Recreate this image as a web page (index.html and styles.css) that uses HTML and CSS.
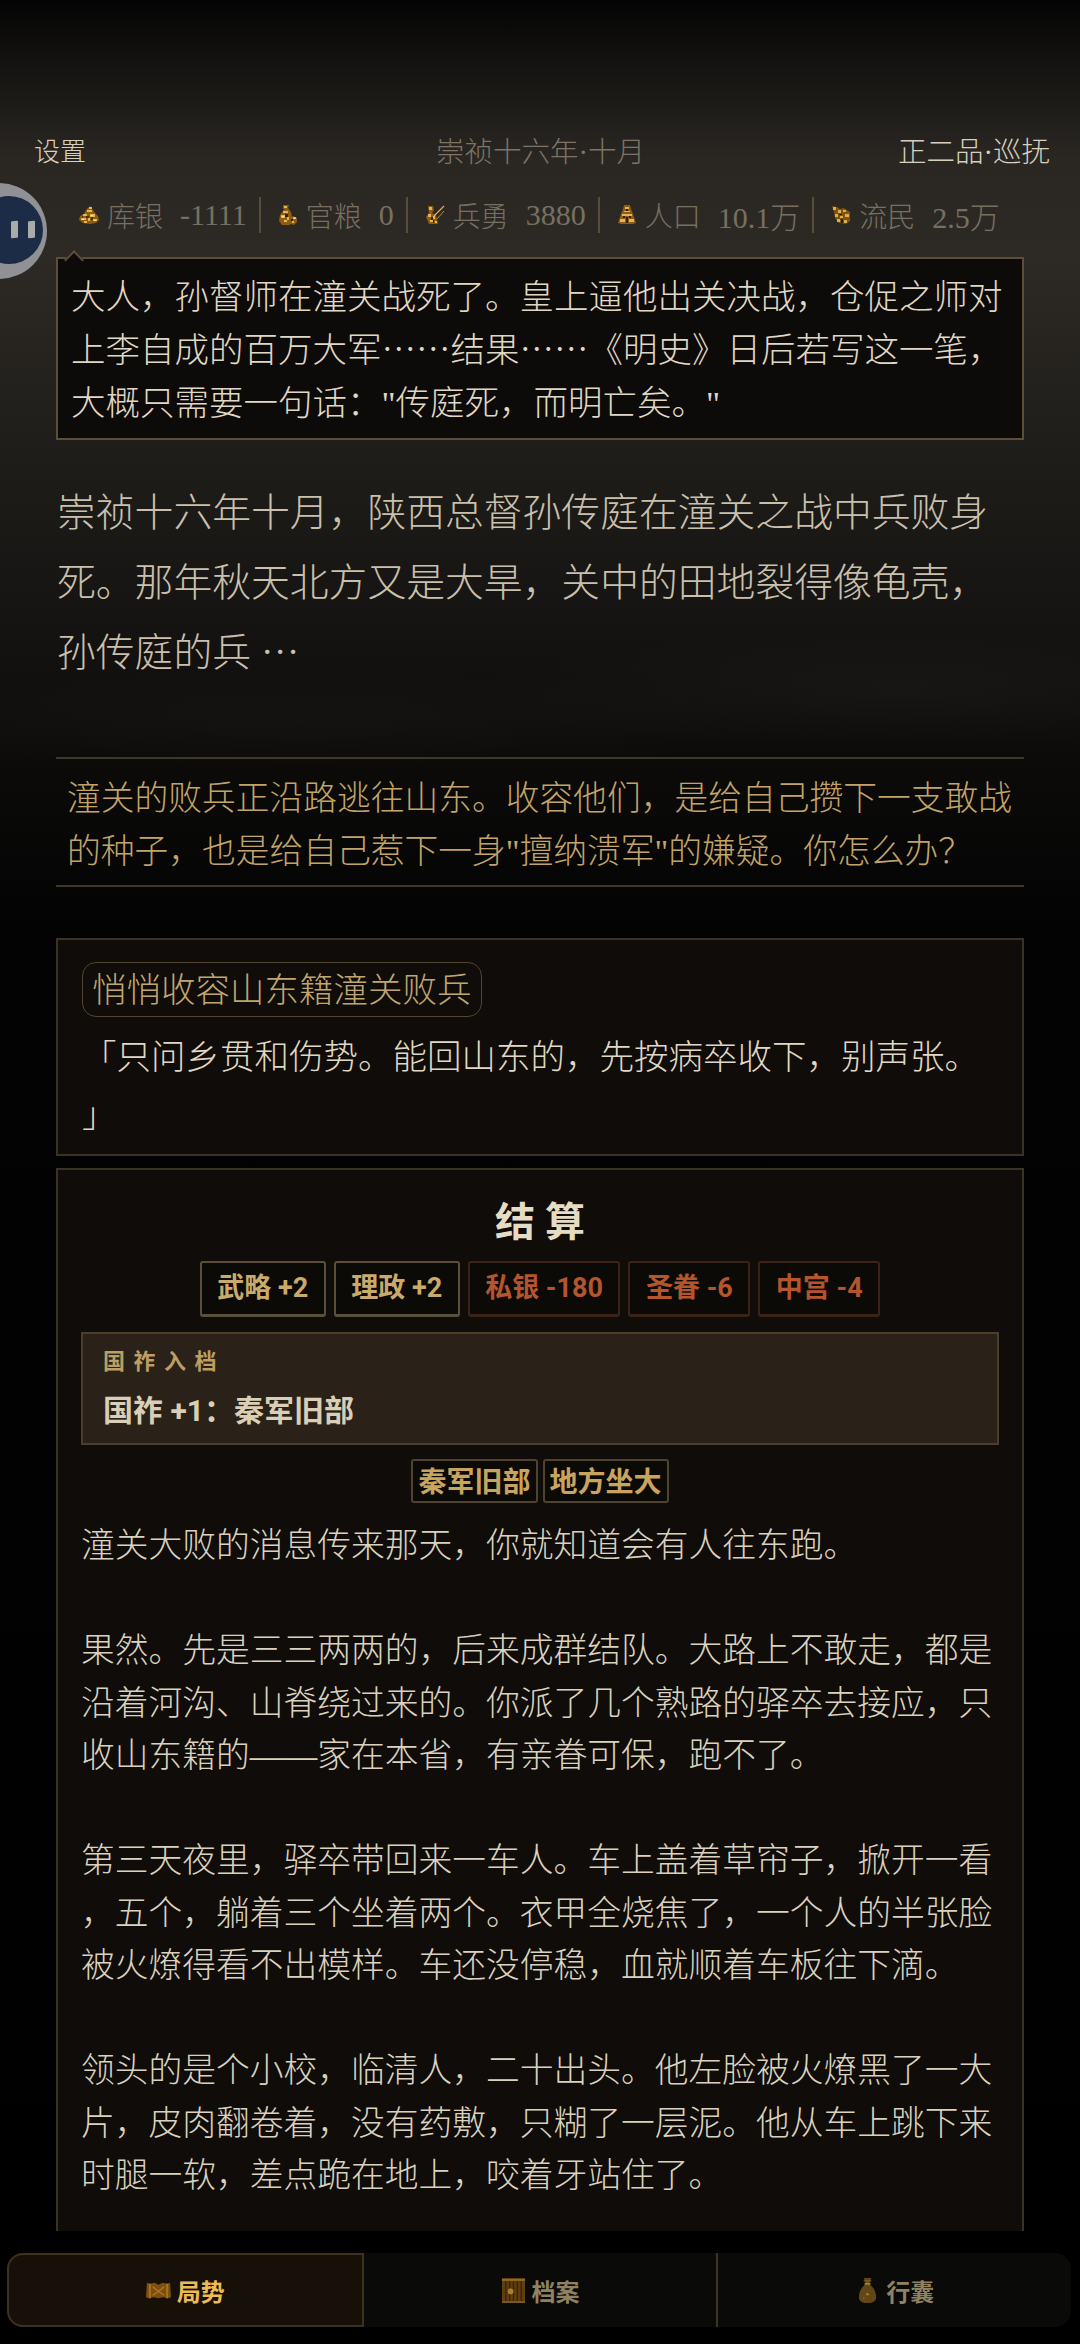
FILE: index.html
```html
<!DOCTYPE html>
<html lang="zh-CN">
<head>
    <meta charset="UTF-8">
    <title>崇祯十六年</title>
    <link rel="stylesheet" href="styles.css">
</head>

<body>
    <!-- 悬浮按钮 -->
    <div class="float-ball">
        <div class="float-inner"><span></span><span></span></div>
    </div>

    <div class="main">
        <!-- 顶栏 -->
        <div class="top-row">
            <span class="top-left">设置</span>
            <span class="top-date">崇祯十六年·十月</span>
            <span class="top-right">正二品·巡抚</span>
        </div>

        <!-- 资源 -->
        <div class="stats">
            <div class="stat stat-silver">
                <svg class="stat-icon" viewBox="0 0 20 20"><path d="M11 1l3 4 2 3 3 3 1 4-3 3-6 1-7-1-4-3 1-4 4-2 2-4z" fill="#8f5c14"/><path d="M10 2h3v2h-3zM8 5h5v2H8zM4 9h4v2H4zM11 9h5v3h-5zM2 13h5v2H2zM9 13h2v3H9zM14 14h4v2h-4zM5 16h3v2H5z" fill="#e6b64e"/><path d="M7 11h3v2H7zM12 12h2v3h-2zM3 11h1v2H3z" fill="#4d3209"/><path d="M12 10h2v1h-2zM3 14h2v1H3zM15 15h2v1h-2z" fill="#fbe9a4"/></svg>
                <span class="stat-name">库银</span><span class="stat-val">-1111</span>
            </div>
            <div class="stat stat-grain">
                <svg class="stat-icon" viewBox="0 0 20 20"><path d="M5 0h6l-1 3 3 4 1 5 1-1 4 2v4l-3 3-3-1-2 1H4l-3-4 1-6 3-4z" fill="#8f5c14"/><path d="M6 1h3v2H6zM5 6h5v2H5zM3 10h4v3H3zM9 12h2v3H9zM15 12h3v2h-3zM6 15h3v2H6zM14 16h2v2h-2z" fill="#e6b64e"/><path d="M7 9h3v3H7zM13 14h2v2h-2zM4 4h2v1H4z" fill="#33210a"/><path d="M4 11h2v1H4zM16 13h1v1h-1z" fill="#fbe9a4"/></svg>
                <span class="stat-name">官粮</span><span class="stat-val">0</span>
            </div>
            <div class="stat stat-troop">
                <svg class="stat-icon" viewBox="0 0 20 20"><path d="M3 1h5l1 4-2 3 4 2 2 9H4L1 12l3-4z" fill="#8f5c14"/><path d="M9 11L19 1" stroke="#e6b64e" stroke-width="1.1"/><path d="M12 14l7-8" stroke="#b88a36" stroke-width="1"/><path d="M4 2h3v3H4zM3 9h3v3H3zM8 11h2v3H8zM5 15h3v2H5zM10 16h2v2h-2z" fill="#e6b64e"/><path d="M6 12h2v3H6zM8 15h1v3H8z" fill="#33210a"/></svg>
                <span class="stat-name">兵勇</span><span class="stat-val">3880</span>
            </div>
            <div class="stat stat-people">
                <svg class="stat-icon" viewBox="0 0 20 20"><path d="M7 0h6l1 4 2 5 3 9-3 1H4l-3-1 3-9 2-5z" fill="#8f5c14"/><path d="M8 2h4v2H8zM7 6h6v1H7zM5 9h10v2H5zM3 14h5v3H3zM12 14h5v3h-5z" fill="#e6b64e"/><path d="M9 4h2v2H9zM9 12h2v6H9zM6 11h2v2H6zM12 11h2v2h-2z" fill="#33210a"/></svg>
                <span class="stat-name">人口</span><span class="stat-val">10.1万</span>
            </div>
            <div class="stat stat-refugee">
                <svg class="stat-icon" viewBox="0 0 20 20"><path d="M1 1l5 1 3 2 4-1 6 4v9l-4 3-7-1-4-5-1-6z" fill="#7f5412"/><path d="M2 2h3v3H2zM7 5h3v3H7zM12 5h3v2h-3zM14 9h4v3h-4zM4 9h3v3H4zM9 11h3v2H9zM6 14h3v3H6zM13 15h3v3h-3z" fill="#dcae4a"/><path d="M10 14h2v4h-2zM8 9h3v1H8z" fill="#2e1f08"/></svg>
                <span class="stat-name">流民</span><span class="stat-val">2.5万</span>
            </div>
        </div>

        <!-- 幕僚对话 -->
        <div class="advisor">
            <div class="advisor-arrow"></div>
            <p>大人，孙督师在潼关战死了。皇上逼他出关决战，仓促之师对<br>上李自成的百万大军<span class="cjk">……</span>结果<span class="cjk">……</span>《明史》日后若写这一笔，<br>大概只需要一句话："传庭死，而明亡矣。"</p>
        </div>

        <p class="story">崇祯十六年十月，陕西总督孙传庭在潼关之战中兵败身<br>死。那年秋天北方又是大旱，关中的田地裂得像龟壳，<br>孙传庭的兵 <span class="cjk">…</span></p>

        <p class="question">潼关的败兵正沿路逃往山东。收容他们，是给自己攒下一支敢战<br>的种子，也是给自己惹下一身"擅纳溃军"的嫌疑。你怎么办？</p>

        <!-- 选择 -->
        <div class="card choice">
            <span class="choice-pill">悄悄收容山东籍潼关败兵</span>
            <p class="choice-quote">「只问乡贯和伤势。能回山东的，先按病卒收下，别声张。<br>」</p>
        </div>

        <!-- 结算 -->
        <div class="card result">
            <h2 class="result-title">结 算</h2>
            <div class="chips">
                <span class="chip">武略 +2</span>
                <span class="chip">理政 +2</span>
                <span class="chip chip-bad">私银 -180</span>
                <span class="chip chip-bad">圣眷 -6</span>
                <span class="chip chip-bad">中宫 -4</span>
            </div>
            <div class="archive">
                <div class="archive-label">国祚入档</div>
                <div class="archive-text">国祚 +1：秦军旧部</div>
            </div>
            <div class="tags">
                <span class="tag">秦军旧部</span>
                <span class="tag">地方坐大</span>
            </div>
            <p class="result-body">潼关大败的消息传来那天，你就知道会有人往东跑。<br><br>果然。先是三三两两的，后来成群结队。大路上不敢走，都是<br>沿着河沟、山脊绕过来的。你派了几个熟路的驿卒去接应，只<br>收山东籍的——家在本省，有亲眷可保，跑不了。<br><br>第三天夜里，驿卒带回来一车人。车上盖着草帘子，掀开一看<br>，五个，躺着三个坐着两个。衣甲全烧焦了，一个人的半张脸<br>被火燎得看不出模样。车还没停稳，血就顺着车板往下滴。<br><br>领头的是个小校，临清人，二十出头。他左脸被火燎黑了一大<br>片，皮肉翻卷着，没有药敷，只糊了一层泥。他从车上跳下来<br>时腿一软，差点跪在地上，咬着牙站住了。</p>
        </div>
    </div>

    <!-- 底部导航 -->
    <div class="tabs">
        <div class="tab tab-active">
            <svg class="tab-icon" viewBox="0 0 26 26"><path d="M1 5l3 1 5-1 4 2 4-2 5 1 3-1 1 15-3 1-5-1-5 1-5-1-5 1-3-1z" fill="#7c4f10"/><path d="M4 6v15M22 6v15" stroke="#a8731d" stroke-width="2"/><path d="M7 9l6 5 6-5M7 18l6-4 6 4" stroke="#a8731d" stroke-width="1.5" fill="none"/></svg>
            <span>局势</span>
        </div>
        <div class="tab">
            <svg class="tab-icon" viewBox="0 0 26 26"><path d="M1 0h24v26H1z" fill="#5f3f10"/><path d="M1 1h24v2H1z" fill="#8f6a26"/><path d="M5 3v21M9 3v9M9 17v7M13 3v21M17 3v21M21 3v21" stroke="#38250a" stroke-width="1.4"/><circle cx="10" cy="14" r="3" fill="#a97f30"/><path d="M1 24h24v2H1z" fill="#7a5a20"/></svg>
            <span>档案</span>
        </div>
        <div class="tab">
            <svg class="tab-icon" viewBox="0 0 26 26"><path d="M9 0h8l-2 5 1 2c4 4 6 8 6 13 0 4-3 6-9 6s-9-2-9-6c0-5 2-9 6-13l1-2z" fill="#634615"/><path d="M10 6h6" stroke="#a5802f" stroke-width="2"/><path d="M9 3h8" stroke="#8a6a27"/><circle cx="13" cy="17" r="1.3" fill="#a5802f"/><circle cx="9" cy="21" r="1" fill="#84651f"/></svg>
            <span>行囊</span>
        </div>
    </div>
</body>
</html>
```

FILE: styles.css
```css
* {
    box-sizing: border-box;
}
html, body {
    margin: 0;
    height: 100%;
}
body {
    display: flex;
    flex-direction: column;
    height: 100vh;
    overflow: hidden;
    position: relative;
    font-family: "Liberation Serif", "Noto Sans CJK SC", serif;
    font-weight: 300;
    color: #d9d1bf;
    background-color: #000;
    background-image:
        radial-gradient(ellipse 420px 60px at 900px 690px, rgba(60,56,50,0.16), rgba(0,0,0,0)),
        radial-gradient(ellipse 500px 50px at 300px 720px, rgba(60,56,50,0.12), rgba(0,0,0,0)),
        linear-gradient(180deg, #040404 0, #131210 60px, #2a2723 160px, #2d2a26 260px, #211f1b 420px, #171513 600px, #0c0b0a 760px, #030303 930px, #000 100%);
}
p {
    margin: 0;
}
.cjk {
    font-family: "Noto Sans CJK SC", sans-serif;
    line-height: 0;
}

/* 悬浮按钮 */
.float-ball {
    position: absolute;
    left: -49px;
    top: 183px;
    width: 96px;
    height: 96px;
    border-radius: 50%;
    background-color: #8f9194;
    display: flex;
    align-items: center;
    justify-content: flex-end;
    padding: 0 4px 3px 0;
}
.float-inner {
    width: 68px;
    height: 68px;
    border-radius: 50%;
    background-color: #1c2c47;
    display: flex;
    align-items: center;
    justify-content: flex-end;
    gap: 10px;
    padding-right: 8px;
}
.float-inner span {
    width: 7px;
    height: 17px;
    border-radius: 1px;
    background-color: #a9abaa;
    transform: skewY(-6deg);
}

.main {
    flex: 1;
    min-height: 0;
    overflow: hidden;
    padding-top: 127px;
    margin-bottom: 22px;
}

/* 顶栏 */
.top-row {
    height: 44px;
    padding: 0 30px 0 34px;
    display: flex;
    align-items: center;
    justify-content: space-between;
    position: relative;
}
.top-left {
    font-size: 26px;
    color: #d8d0bc;
}
.top-date {
    position: absolute;
    left: 436px;
    font-size: 28.5px;
    color: #7d7564;
}
.top-right {
    font-size: 28.5px;
    color: #d8d0bc;
}

.stats {
    display: flex;
    height: 36px;
    margin-top: 26px;
    padding-left: 79px;
    align-items: center;
}
.stat {
    display: flex;
    align-items: center;
    height: 36px;
    font-size: 28px;
    color: #777060;
    border-right: 2px solid #574d39;
    padding-right: 12px;
    margin-right: 17px;
}
.stat:last-child {
    border-right: none;
}
.stat-icon {
    width: 20px;
    height: 20px;
    margin-right: 8px;
    flex-shrink: 0;
}
.stat-name {
    margin-right: 17px;
}
.stat-val {
    font-size: 30px;
}

/* 幕僚对话 */
.advisor {
    position: relative;
    margin: 24px 56px 0;
    padding: 12px 12px 8px 13px;
    border: 2px solid #5b4f39;
    background-color: #0c0b09;
    font-size: 34.5px;
    line-height: 53px;
    color: #e0d8c4;
    white-space: nowrap;
}
.advisor-arrow {
    position: absolute;
    left: 9px;
    top: -6px;
    width: 14px;
    height: 14px;
    background-color: #0c0b09;
    border-left: 2px solid #5b4f39;
    border-top: 2px solid #5b4f39;
    transform: rotate(45deg);
}

.story {
    margin: 38px 57px 0;
    font-size: 38.8px;
    line-height: 70px;
    color: #c9c0ad;
    white-space: nowrap;
}
.question {
    margin: 69px 56px 0;
    padding: 13px 11px 7px;
    border-top: 2px solid #3f3728;
    border-bottom: 2px solid #3f3728;
    font-size: 33.75px;
    line-height: 53px;
    color: #c2a468;
    white-space: nowrap;
}

/* 卡片 */
.card {
    margin: 0 56px;
    border: 2px solid #3a3225;
    background-color: #0f0c09;
}
.choice {
    margin-top: 51px;
    height: 218px;
    padding: 22px 24px 10px;
}
.choice-pill {
    display: inline-block;
    height: 55px;
    padding: 0 9px;
    border: 1px solid #51462f;
    border-radius: 14px;
    font-size: 34.5px;
    line-height: 55px;
    color: #bfa670;
}
.choice-quote {
    margin-top: 11px;
    font-size: 34.5px;
    line-height: 58px;
    color: #e0d8c4;
    white-space: nowrap;
}
.result {
    margin-top: 12px;
    padding: 23px 23px 60px;
}
.result-title {
    margin: 0;
    height: 60px;
    text-align: center;
    font-size: 40px;
    line-height: 60px;
    font-weight: 700;
    color: #e6dcc4;
}
.chips {
    display: flex;
    justify-content: center;
    gap: 8px;
    margin-top: 8px;
}
.chip {
    height: 56px;
    padding: 0 15.5px;
    border: 2px solid #5a4f38;
    border-bottom-width: 3px;
    border-radius: 3px;
    background-color: #0c0a07;
    font-family: Roboto, "Noto Sans CJK SC", sans-serif;
    font-size: 27px;
    font-weight: 700;
    line-height: 50px;
    color: #c9aa6a;
}
.chip-bad {
    border-color: #3c2317;
    color: #b4552c;
}
.archive {
    height: 113px;
    margin-top: 15px;
    padding: 12px 20px;
    border: 2px solid #4a3f2b;
    background-color: #2a2218;
    font-family: Roboto, "Noto Sans CJK SC", sans-serif;
    font-weight: 700;
}
.archive-label {
    font-size: 22px;
    line-height: 32px;
    letter-spacing: 8.5px;
    color: #bd9f63;
}
.archive-text {
    margin-top: 14px;
    font-size: 30px;
    line-height: 38px;
    color: #d9cfb6;
}
.tags {
    display: flex;
    justify-content: center;
    gap: 5px;
    margin-top: 14px;
}
.tag {
    height: 44px;
    padding: 0 5px;
    border: 2px solid #4d432e;
    border-radius: 3px;
    background-color: #0c0a07;
    font-family: "Noto Sans CJK SC", sans-serif;
    font-size: 28px;
    font-weight: 700;
    line-height: 38px;
    color: #c9a45e;
}
.result-body {
    margin-top: 17px;
    font-size: 33.75px;
    line-height: 52.5px;
    color: #dad2bf;
    white-space: nowrap;
}

/* 底部导航 */
.tabs {
    flex-shrink: 0;
    display: flex;
    height: 74px;
    margin: 0 9px 17px 7px;
    background-color: #0a0a08;
    border-radius: 16px;
    font-family: "Noto Sans CJK SC", sans-serif;
    font-size: 24px;
    font-weight: 700;
    color: #8f8263;
}
.tab {
    flex: 1;
    display: flex;
    align-items: center;
    justify-content: center;
    gap: 6px;
    border-right: 2px solid #3d3526;
}
.tab:last-child {
    border-right: none;
}
.tab-active {
    background-color: #171008;
    border: 2px solid #3d3220;
    border-radius: 16px 0 0 16px;
    color: #edbb55;
}
.tab-icon {
    width: 25px;
    height: 25px;
}
```
